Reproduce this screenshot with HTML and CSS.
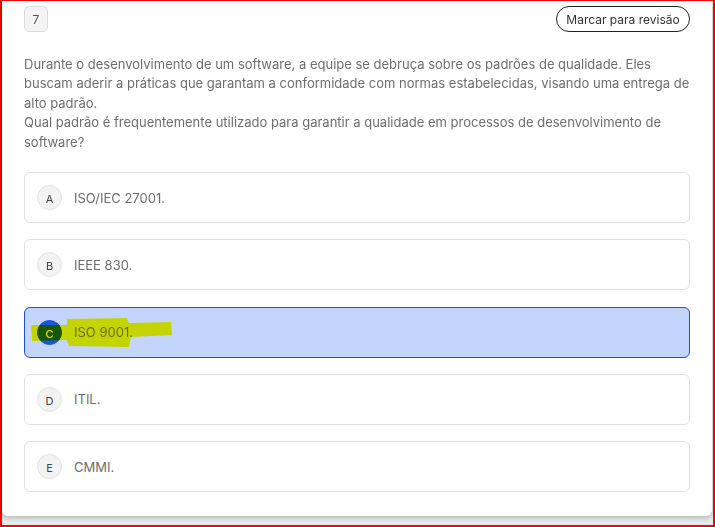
FILE: index.html
```html
<!DOCTYPE html>
<html lang="pt-BR">
<head>
    <meta charset="UTF-8">
    <title>Questão 7</title>
    <link rel="stylesheet" href="styles.css">
</head>
<body>
    <div class="frame">
        <div class="card">
            <div class="card-head">
                <span class="qnum">7</span>
                <button class="review-btn">Marcar para revisão</button>
            </div>

            <p class="statement">
                Durante o desenvolvimento de um software, a equipe se debruça sobre os padrões de qualidade. Eles buscam aderir a práticas que garantam a conformidade com normas estabelecidas, visando uma entrega de alto padrão.<br>
                Qual padrão é frequentemente utilizado para garantir a qualidade em processos de desenvolvimento de software?
            </p>

            <ul class="options">
                <li class="option"><span class="letter">A</span><span class="opt-text">ISO/IEC 27001.</span></li>
                <li class="option"><span class="letter">B</span><span class="opt-text">IEEE 830.</span></li>
                <li class="option selected">
                    <span class="letter">C</span><span class="opt-text">ISO 9001.</span>
                    <!-- marca-texto por cima da alternativa -->
                    <svg class="marker" width="150" height="34" viewBox="0 0 150 34">
                        <path d="M2 8 L38 8 L38 2 L98 1 L100 6 L142 5 L143 18 L102 20 L100 30 L40 29 L38 23 L3 24 Z" fill="#c6d400"/>
                    </svg>
                </li>
                <li class="option"><span class="letter">D</span><span class="opt-text">ITIL.</span></li>
                <li class="option"><span class="letter">E</span><span class="opt-text">CMMI.</span></li>
            </ul>
        </div>
    </div>
</body>
</html>
```

FILE: styles.css
```css
body {
    margin: 0;
    font-family: Inter, "Noto Sans", sans-serif;
}
.frame {
    width: 715px;
    height: 527px;
    box-sizing: border-box;
    border: 2px solid #ff0000;
    border-top-width: 1px;
    background-color: #e9e9e9;
}
.card {
    height: 515px;
    box-sizing: border-box;
    margin-right: 1px;
    padding: 5px 22px 0 22px;
    background-color: #fff;
    border-radius: 0 0 6px 6px;
    box-shadow: 0 2px 5px rgba(0, 0, 0, 0.22);
}
.card-head {
    display: flex;
    justify-content: space-between;
    align-items: center;
}
.qnum {
    width: 24px;
    height: 26px;
    box-sizing: border-box;
    display: flex;
    align-items: center;
    justify-content: center;
    background-color: #f4f4f4;
    border: 1px solid #dcdcdc;
    border-radius: 5px;
    font-size: 12px;
    color: #555;
}
.review-btn {
    height: 26px;
    width: 134px;
    padding: 0;
    background: #fff;
    border: 1px solid #222;
    border-radius: 13px;
    font-family: inherit;
    font-size: 12px;
    color: #333;
}
.statement {
    margin: 23px 0 20px 0;
    font-size: 13px;
    line-height: 19.4px;
    color: #6e6e6e;
}
.options {
    list-style: none;
    margin: 0;
    padding: 0;
    display: flex;
    flex-direction: column;
    gap: 16.25px;
}
.option {
    position: relative;
    height: 51px;
    box-sizing: border-box;
    display: flex;
    align-items: center;
    padding-left: 12px;
    border: 1px solid #e0e0e0;
    border-radius: 6px;
    background-color: #fff;
}
.letter {
    width: 25px;
    height: 25px;
    box-sizing: border-box;
    display: flex;
    align-items: center;
    justify-content: center;
    padding-top: 3px;
    border-radius: 50%;
    background-color: #f3f3f3;
    border: 1px solid #e2e2e2;
    font-size: 11px;
    color: #444;
}
.opt-text {
    margin-left: 12px;
    font-size: 13px;
    color: #6e6e6e;
}
.option.selected {
    background-color: #c4d5fd;
    border-color: #1d51d4;
}
.option.selected .letter {
    background-color: #1a56db;
    border-color: #1a56db;
    color: #fff;
}
.marker {
    position: absolute;
    left: 4px;
    top: 9px;
    mix-blend-mode: darken;
}
```
